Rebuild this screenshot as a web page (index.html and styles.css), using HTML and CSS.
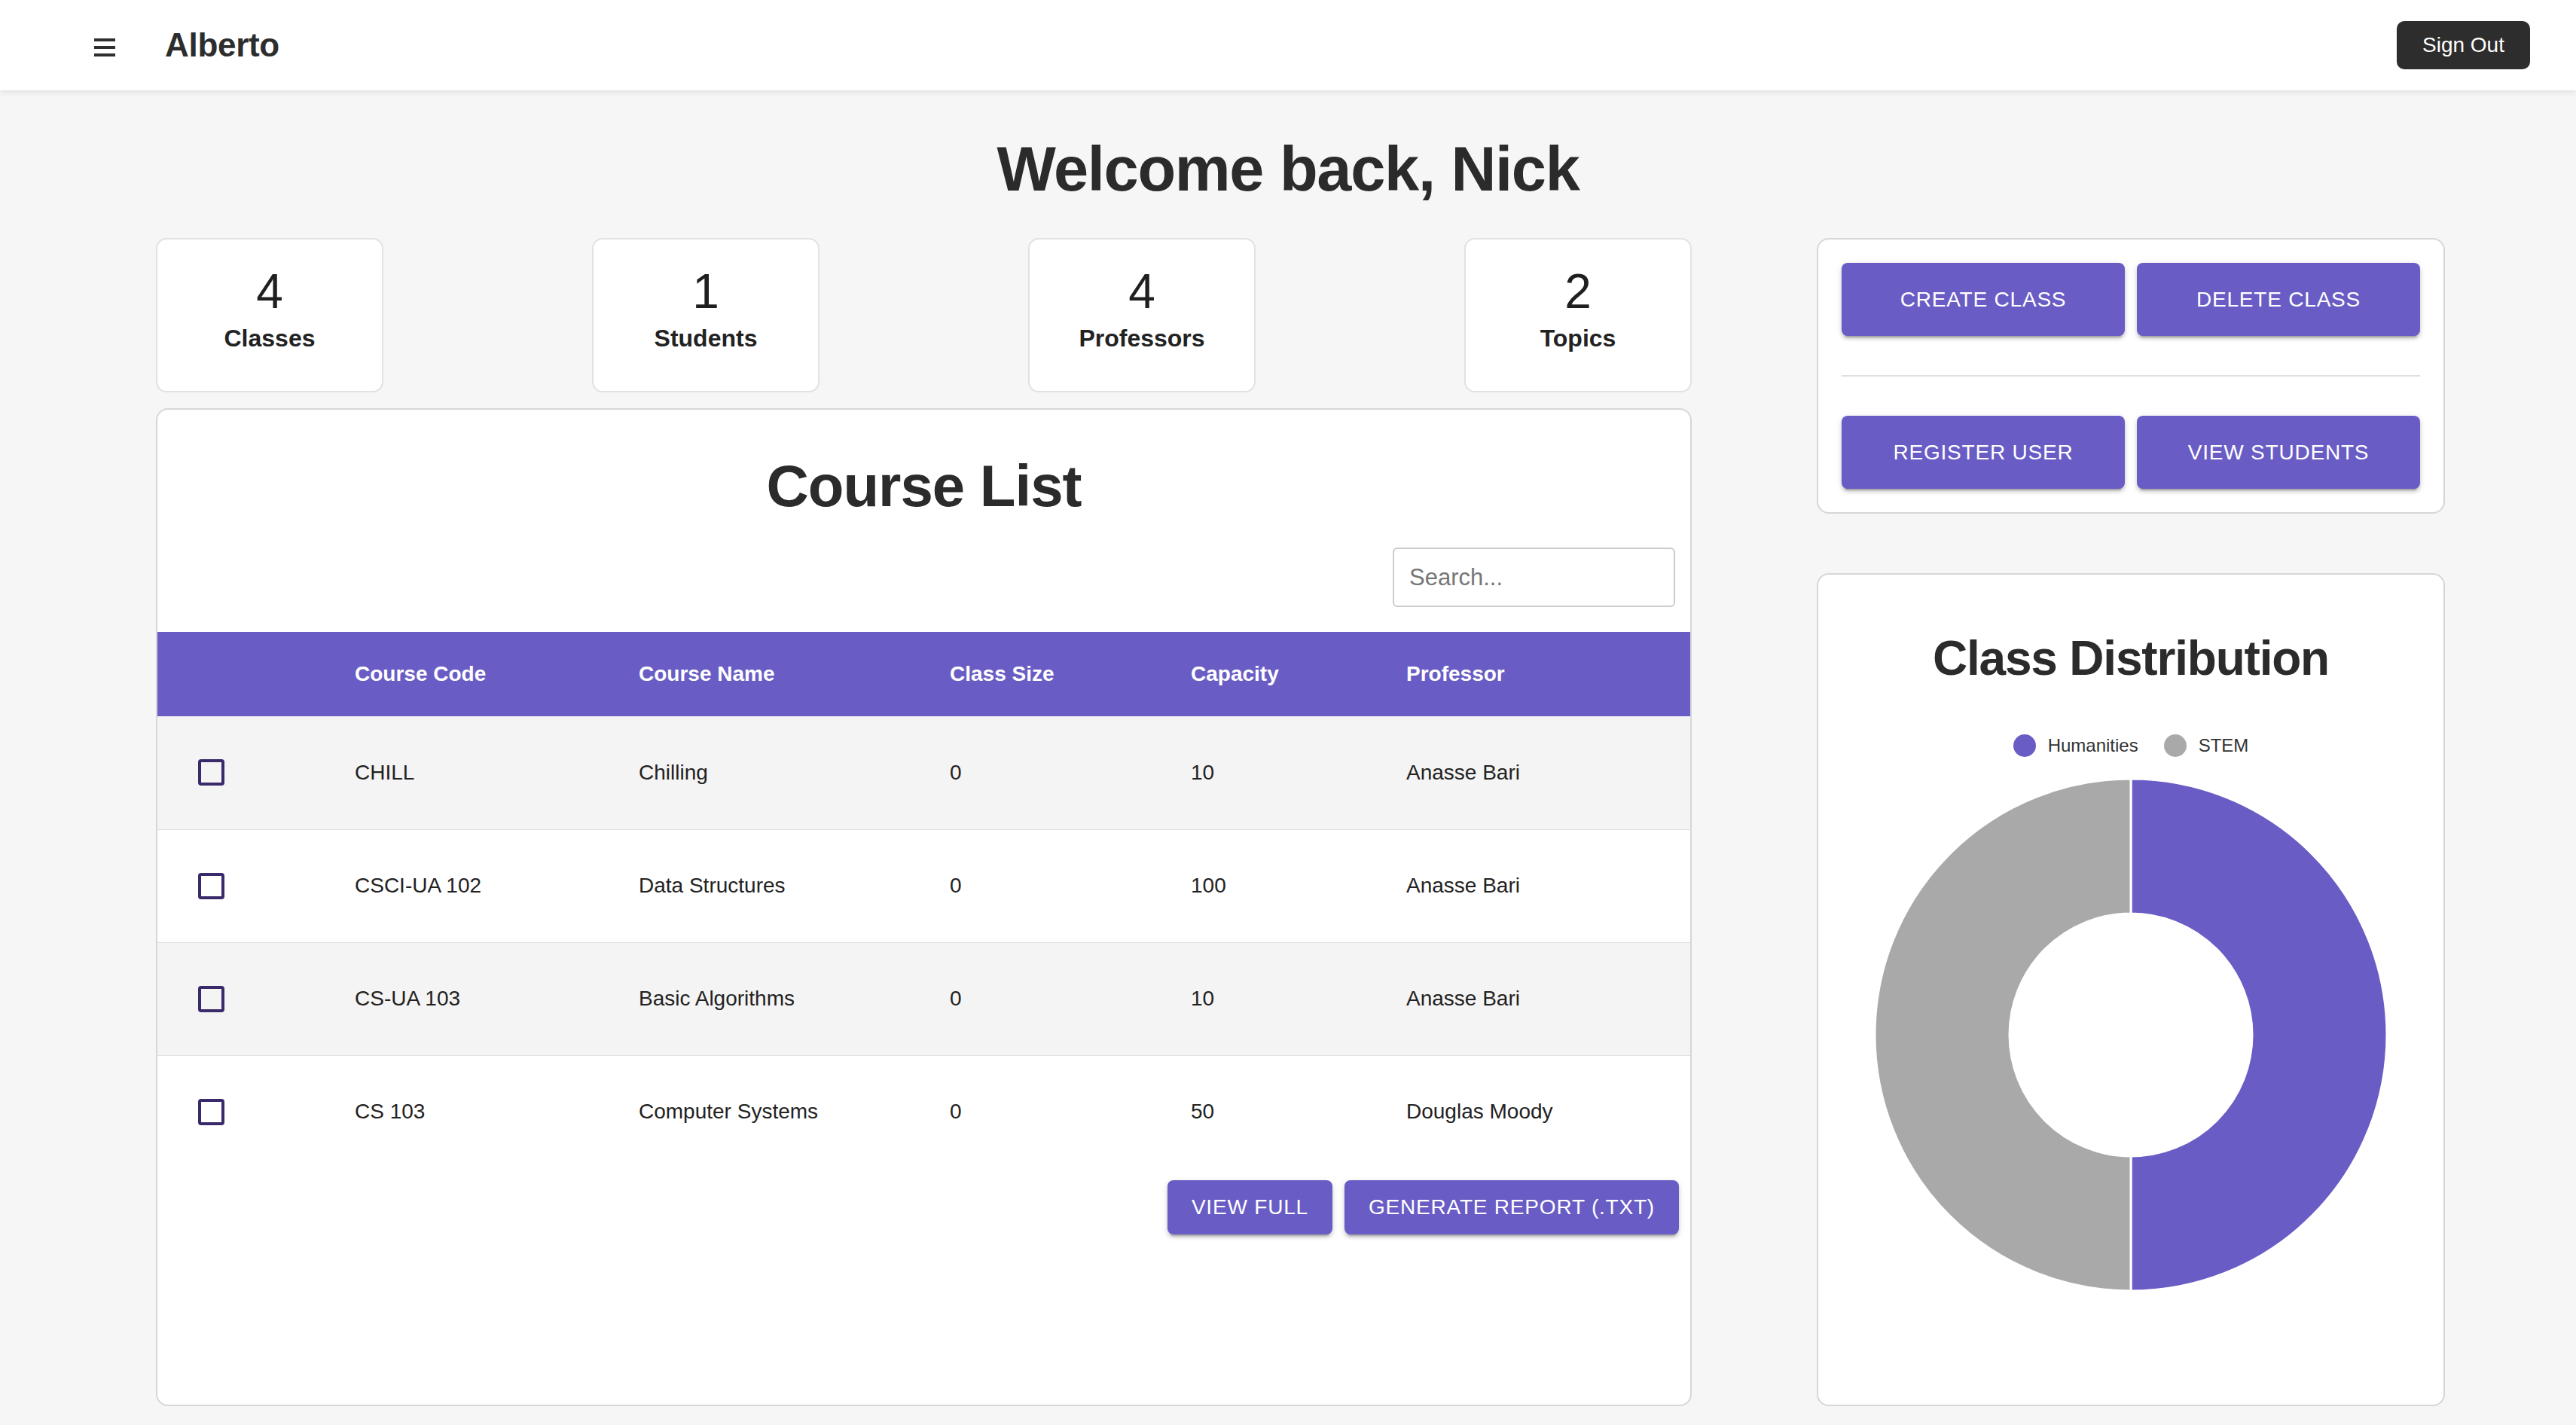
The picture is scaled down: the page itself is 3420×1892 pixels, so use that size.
FILE: index.html
```html
<!DOCTYPE html>
<html lang="en">
<head>
<meta charset="utf-8">
<title>Alberto</title>
<link rel="stylesheet" href="styles.css">
</head>
<body>
<header class="topbar">
  <div class="brand">
    <svg class="menu-icon" width="28" height="24" viewBox="0 0 28 24" aria-hidden="true">
      <rect x="0" y="0" width="28" height="4" fill="#2f2f2f"/>
      <rect x="0" y="10" width="28" height="4" fill="#2f2f2f"/>
      <rect x="0" y="20" width="28" height="4" fill="#2f2f2f"/>
    </svg>
    <span class="brand-name">Alberto</span>
  </div>
  <button class="signout">Sign Out</button>
</header>

<main class="page">
  <h1 class="welcome">Welcome back, Nick</h1>
  <div class="dash">
    <section class="left-col">
      <div class="stats">
        <div class="stat"><div class="stat-num">4</div><div class="stat-label">Classes</div></div>
        <div class="stat"><div class="stat-num">1</div><div class="stat-label">Students</div></div>
        <div class="stat"><div class="stat-num">4</div><div class="stat-label">Professors</div></div>
        <div class="stat"><div class="stat-num">2</div><div class="stat-label">Topics</div></div>
      </div>
      <div class="panel course-panel">
        <h2 class="course-title">Course List</h2>
        <div class="search-row">
          <input class="search" type="text" placeholder="Search...">
        </div>
        <table class="courses">
          <colgroup>
            <col class="c-check"><col class="c-code"><col class="c-name"><col class="c-size"><col class="c-cap"><col class="c-prof">
          </colgroup>
          <thead>
            <tr><th></th><th>Course Code</th><th>Course Name</th><th>Class Size</th><th>Capacity</th><th>Professor</th></tr>
          </thead>
          <tbody>
            <tr><td><span class="check"></span></td><td>CHILL</td><td>Chilling</td><td>0</td><td>10</td><td>Anasse Bari</td></tr>
            <tr><td><span class="check"></span></td><td>CSCI-UA 102</td><td>Data Structures</td><td>0</td><td>100</td><td>Anasse Bari</td></tr>
            <tr><td><span class="check"></span></td><td>CS-UA 103</td><td>Basic Algorithms</td><td>0</td><td>10</td><td>Anasse Bari</td></tr>
            <tr><td><span class="check"></span></td><td>CS 103</td><td>Computer Systems</td><td>0</td><td>50</td><td>Douglas Moody</td></tr>
          </tbody>
        </table>
        <div class="table-actions">
          <button class="btn btn-sm">VIEW FULL</button>
          <button class="btn btn-sm">GENERATE REPORT (.TXT)</button>
        </div>
      </div>
    </section>

    <aside class="right-col">
      <div class="panel actions-panel">
        <div class="btn-grid">
          <button class="btn btn-lg">CREATE CLASS</button>
          <button class="btn btn-lg">DELETE CLASS</button>
        </div>
        <hr class="divider">
        <div class="btn-grid">
          <button class="btn btn-lg">REGISTER USER</button>
          <button class="btn btn-lg">VIEW STUDENTS</button>
        </div>
      </div>
      <div class="panel chart-panel">
        <h2 class="chart-title">Class Distribution</h2>
        <div class="legend">
          <span class="legend-item"><span class="dot dot-hum"></span>Humanities</span>
          <span class="legend-item"><span class="dot dot-stem"></span>STEM</span>
        </div>
        <svg class="donut" width="680" height="680" viewBox="0 0 680 680" aria-hidden="true">
          <path d="M340 0 A340 340 0 0 1 340 680 L340 501 A161 161 0 0 0 340 179 Z" fill="#695dc5" stroke="#ffffff" stroke-width="3"/>
          <path d="M340 680 A340 340 0 0 1 340 0 L340 179 A161 161 0 0 0 340 501 Z" fill="#a9a9a9" stroke="#ffffff" stroke-width="3"/>
        </svg>
      </div>
    </aside>
  </div>
</main>
</body>
</html>
```
FILE: styles.css
```css
* { box-sizing: border-box; }

html, body {
  margin: 0;
  padding: 0;
}

body {
  background: #f6f6f6;
  font-family: "Liberation Sans", Arial, Helvetica, sans-serif;
  color: #2b2b2b;
  width: 3420px;
  height: 1892px;
  overflow: hidden;
}

.topbar {
  height: 120px;
  background: #ffffff;
  display: flex;
  align-items: center;
  justify-content: space-between;
  padding: 0 61px 0 125px;
  box-shadow: 0 2px 8px rgba(0, 0, 0, 0.10);
  position: relative;
}

.brand {
  display: flex;
  align-items: center;
  gap: 66px;
}

.menu-icon { display: block; margin-top: 6px; }

.brand-name {
  font-size: 44px;
  font-weight: 700;
  color: #2d2d2d;
  line-height: 1;
  letter-spacing: -0.3px;
}

.signout {
  height: 64px;
  width: 177px;
  background: #2d2d2d;
  color: #ffffff;
  border: none;
  border-radius: 10px;
  font-family: inherit;
  font-size: 28px;
  padding: 0;
}

.page {
  padding: 63px 0 0 0;
}

.welcome {
  margin: 0 0 50px 0;
  text-align: center;
  font-size: 83px;
  line-height: 1;
  font-weight: 700;
  letter-spacing: -1.3px;
  color: #2b2b2b;
}

.dash {
  display: flex;
  gap: 166px;
  height: 1551px;
  margin-left: 207px;
}

.left-col {
  width: 2039px;
  display: flex;
  flex-direction: column;
  gap: 21px;
}

.right-col {
  width: 834px;
  display: flex;
  flex-direction: column;
  gap: 79px;
}

.stats {
  display: flex;
  justify-content: space-between;
}

.stat {
  width: 302px;
  height: 205px;
  background: #ffffff;
  border: 2px solid #e2e2e2;
  border-radius: 14px;
  padding-top: 37px;
  text-align: center;
}

.stat-num {
  font-size: 64px;
  line-height: 1;
  color: #1f1f1f;
}

.stat-label {
  margin-top: 14px;
  font-size: 32px;
  line-height: 1;
  font-weight: 700;
  color: #222222;
}

.panel {
  background: #ffffff;
  border: 2px solid #d6d6d6;
  border-radius: 16px;
}

.course-panel {
  flex: 1;
  padding-top: 62px;
  overflow: hidden;
}

.course-title {
  margin: 0;
  text-align: center;
  font-size: 78px;
  line-height: 1;
  font-weight: 700;
  letter-spacing: -1px;
  color: #2b2b2b;
}

.search-row {
  display: flex;
  justify-content: flex-end;
  padding: 43px 20px 33px 0;
}

.search {
  width: 375px;
  height: 79px;
  border: 2px solid #cccccc;
  border-radius: 6px;
  padding: 0 20px;
  font-family: inherit;
  font-size: 31px;
  color: #333;
  background: #fff;
}

.search::placeholder { color: #767676; }

.courses {
  width: 100%;
  border-collapse: collapse;
  table-layout: fixed;
}

.c-check { width: 262px; }
.c-code { width: 377px; }
.c-name { width: 413px; }
.c-size { width: 320px; }
.c-cap { width: 286px; }
.c-prof { width: auto; }

.courses th {
  height: 112px;
  background: #695dc5;
  color: #ffffff;
  font-size: 28px;
  font-weight: 700;
  text-align: left;
  padding: 0;
}

.courses td {
  height: 150px;
  padding: 0;
  font-size: 28px;
  color: #222222;
  border-bottom: 1px solid #e0e0e0;
}

.courses tbody tr:last-child td { border-bottom: none; }

.courses tbody tr:nth-child(odd) { background: #f4f4f4; }
.courses tbody tr:nth-child(even) { background: #ffffff; }

.check {
  display: block;
  width: 35px;
  height: 35px;
  margin-left: 54px;
  border: 4px solid #3b2a6b;
  border-radius: 4px;
}

.table-actions {
  display: flex;
  justify-content: flex-end;
  gap: 16px;
  padding: 16px 15px 0 0;
}

.btn {
  background: #695dc5;
  color: #ffffff;
  border: none;
  border-radius: 8px;
  font-family: inherit;
  font-size: 28px;
  letter-spacing: 0.8px;
  box-shadow: 0 6px 2px -4px rgba(0,0,0,0.2), 0 4px 4px 0 rgba(0,0,0,0.14), 0 2px 10px 0 rgba(0,0,0,0.12);
}

.btn-sm {
  height: 72px;
  padding: 0 32px;
}

.btn-lg {
  height: 97px;
}

.actions-panel {
  padding: 31px;
}

.btn-grid {
  display: grid;
  grid-template-columns: 1fr 1fr;
  gap: 16px;
}

.divider {
  border: none;
  height: 2px;
  background: #e0e0e0;
  margin: 52px 0;
}

.chart-panel {
  flex: 1;
  display: flex;
  flex-direction: column;
  align-items: center;
  padding-top: 79px;
}

.chart-title {
  margin: 0;
  font-size: 64px;
  line-height: 1;
  font-weight: 700;
  letter-spacing: -1.2px;
  color: #2b2b2b;
}

.legend {
  margin-top: 69px;
  height: 30px;
  display: flex;
  align-items: center;
  gap: 34px;
  font-size: 24px;
  color: #333333;
}

.legend-item {
  display: flex;
  align-items: center;
  gap: 16px;
}

.dot {
  width: 30px;
  height: 30px;
  border-radius: 50%;
  display: inline-block;
}

.dot-hum { background: #695dc5; }
.dot-stem { background: #a9a9a9; }

.donut {
  display: block;
  margin-top: 29px;
}
```
